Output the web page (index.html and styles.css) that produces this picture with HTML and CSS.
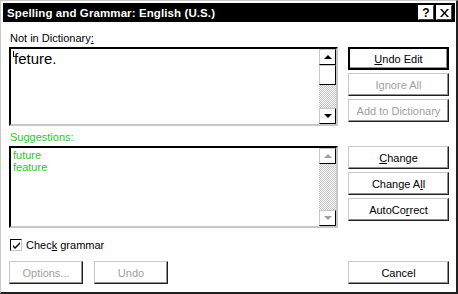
FILE: index.html
```html
<!DOCTYPE html>
<html lang="en">
<head>
    <meta charset="UTF-8">
    <title>Spelling and Grammar</title>
    <link rel="stylesheet" href="styles.css">
</head>
<body>
    <div class="window">
        <div class="titlebar">
            <span class="title">Spelling and Grammar: English (U.S.)</span>
            <span class="tb-buttons">
                <span class="tb-btn">?</span>
                <span class="tb-btn">
                    <svg width="9" height="8" viewBox="0 0 9 8"><path d="M0 0h2l2.5 3 2.5-3h2L5.5 4 9 8H7L4.5 5 2 8H0l3.5-4z" fill="#000"/></svg>
                </span>
            </span>
        </div>
        <div class="content">
            <!-- 不在字典中 -->
            <div class="section">
                <div class="left">
                    <div class="label">Not in Dictionary<u>:</u></div>
                    <div class="box box-top">
                        <div class="box-text big"><span class="caret"></span>feture.</div>
                        <div class="scrollbar">
                            <div class="arrow"><span class="tri up"></span></div>
                            <div class="thumb"></div>
                            <div class="track"></div>
                            <div class="arrow"><span class="tri down"></span></div>
                        </div>
                    </div>
                </div>
                <div class="buttons">
                    <button class="btn default"><u>U</u>ndo Edit</button>
                    <button class="btn disabled">Ignore All</button>
                    <button class="btn disabled">Add to Dictionary</button>
                </div>
            </div>
            <!-- 建議 -->
            <div class="section">
                <div class="left">
                    <div class="label green">Suggestions:</div>
                    <div class="box box-bottom">
                        <div class="box-text green">future<br>feature</div>
                        <div class="scrollbar">
                            <div class="arrow"><span class="tri up off"></span></div>
                            <div class="track"></div>
                            <div class="arrow"><span class="tri down off"></span></div>
                        </div>
                    </div>
                </div>
                <div class="buttons">
                    <button class="btn"><u>C</u>hange</button>
                    <button class="btn">Change A<u>l</u>l</button>
                    <button class="btn">AutoCo<u>r</u>rect</button>
                </div>
            </div>
            <div class="check-row">
                <span class="checkbox">
                    <svg width="9" height="9" viewBox="0 0 9 9"><path d="M1 4l2 2 5-5v2L3 8 1 6z" fill="#000"/></svg>
                </span>
                <span>Chec<u>k</u> grammar</span>
            </div>
            <div class="bottom-row">
                <button class="btn small disabled">Options...</button>
                <button class="btn small disabled">Undo</button>
                <span class="spacer"></span>
                <button class="btn">Cancel</button>
            </div>
        </div>
    </div>
</body>
</html>
```

FILE: styles.css
```css
body {
    margin: 0;
    padding: 0;
    background-color: #ffffff;
    font-family: "Liberation Sans", Arial, sans-serif;
    font-size: 11px;
    color: #000;
}
.window {
    width: 458px;
    height: 294px;
    box-sizing: border-box;
    border: 1px solid #c8c8c8;
    border-right: 2px solid #202020;
    border-bottom: 2px solid #202020;
    padding: 2px 1px 2px 2px;
    background-color: #ffffff;
    display: flex;
    flex-direction: column;
}
.titlebar {
    height: 19px;
    background-color: #000;
    color: #fff;
    display: flex;
    align-items: center;
    justify-content: space-between;
    padding: 0 3px 0 4px;
}
.title {
    font-weight: bold;
    font-size: 11.5px;
    letter-spacing: 0.1px;
}
.tb-buttons {
    display: flex;
    gap: 2px;
}
.tb-btn {
    width: 16px;
    height: 15px;
    box-sizing: border-box;
    background-color: #fff;
    border: 1px solid #fff;
    border-right-color: #404040;
    border-bottom-color: #404040;
    color: #000;
    font-weight: bold;
    font-size: 12px;
    line-height: 12px;
    text-align: center;
    display: flex;
    align-items: center;
    justify-content: center;
}
.content {
    flex: 1;
    padding: 9px 6px 0 6px;
    display: flex;
    flex-direction: column;
}
.section {
    display: flex;
    gap: 10px;
    margin-bottom: 4px;
}
.left {
    width: 330px;
}
.label {
    height: 14px;
    line-height: 14px;
    margin-bottom: 2px;
    padding-left: 1px;
}
.green {
    color: #2cc52c;
}
.box {
    box-sizing: border-box;
    border: 2px solid #000;
    border-right-color: #c8c8c8;
    border-bottom-color: #c8c8c8;
    display: flex;
    background-color: #fff;
}
.box-top {
    height: 79px;
}
.box-bottom {
    height: 82px;
}
.box-text {
    flex: 1;
    padding: 1px 2px;
    line-height: 12px;
}
.box-text.big {
    font-size: 15px;
    line-height: 18px;
    padding-top: 1px;
}
.caret {
    display: inline-block;
    width: 1px;
    height: 6px;
    background-color: #000;
    vertical-align: top;
    margin-top: 1px;
}
.scrollbar {
    width: 17px;
    display: flex;
    flex-direction: column;
}
.arrow {
    height: 16px;
    box-sizing: border-box;
    border: 1px solid #c8c8c8;
    border-right-color: #000;
    border-bottom-color: #000;
    display: flex;
    align-items: center;
    justify-content: center;
    background-color: #fff;
}
.thumb {
    height: 20px;
    box-sizing: border-box;
    border: 1px solid #c8c8c8;
    border-right-color: #000;
    border-bottom-color: #000;
    background-color: #fff;
}
.track {
    flex: 1;
    background: repeating-conic-gradient(#c0c0c0 0 25%, #ffffff 0 50%) 0 0 / 2px 2px;
}
.tri {
    width: 0;
    height: 0;
    border-left: 4px solid transparent;
    border-right: 4px solid transparent;
}
.tri.up {
    border-bottom: 4px solid #000;
}
.tri.down {
    border-top: 4px solid #000;
}
.tri.up.off {
    border-bottom-color: #a0a0a0;
}
.tri.down.off {
    border-top-color: #a0a0a0;
}
.buttons {
    padding-top: 16px;
    display: flex;
    flex-direction: column;
    gap: 3px;
}
.btn {
    width: 101px;
    height: 23px;
    box-sizing: border-box;
    background-color: #fff;
    border: 1px solid #c8c8c8;
    border-right-color: #202020;
    border-bottom-color: #202020;
    box-shadow: inset -1px -1px 0 #909090;
    font-family: "Liberation Sans", Arial, sans-serif;
    font-size: 11px;
    color: #000;
    padding: 0;
}
.btn.default {
    border: 2px solid #000;
    box-shadow: inset -1px -1px 0 #909090;
}
.btn.disabled {
    color: #a0a0a0;
}
.btn.small {
    width: 74px;
}
.check-row {
    margin-top: 6px;
    height: 14px;
    display: flex;
    align-items: center;
    gap: 4px;
    padding-left: 1px;
}
.checkbox {
    width: 12px;
    height: 12px;
    box-sizing: border-box;
    border: 1px solid #000;
    border-right-color: #c8c8c8;
    border-bottom-color: #c8c8c8;
    display: flex;
    align-items: center;
    justify-content: center;
}
.bottom-row {
    margin-top: 9px;
    display: flex;
    gap: 11px;
}
.spacer {
    flex: 1;
}
```
